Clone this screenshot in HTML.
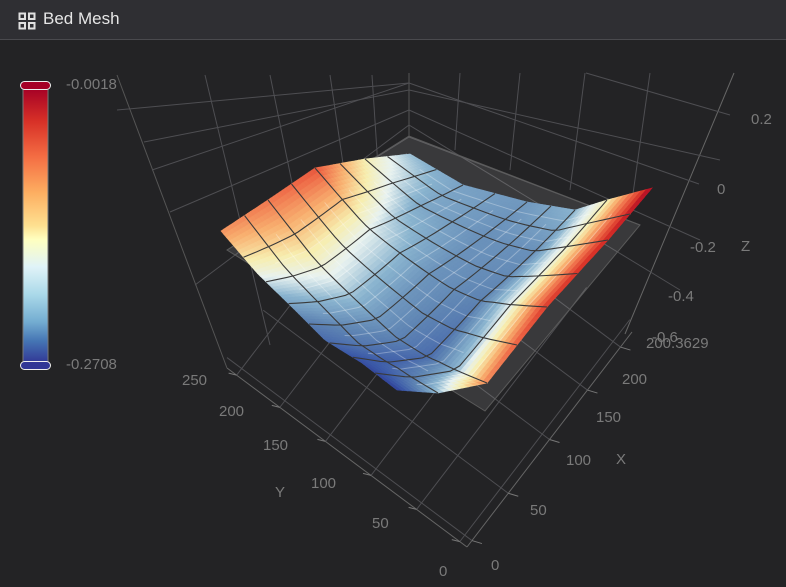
<!DOCTYPE html>
<html><head><meta charset="utf-8"><style>
html,body{margin:0;padding:0;width:786px;height:587px;overflow:hidden;background:#232325;font-family:"Liberation Sans",sans-serif}
.hdr{position:absolute;left:0;top:0;width:786px;height:40px;background:#2f2f33;border-bottom:1px solid #4a4a4e;box-sizing:border-box}
.hdr span{position:absolute;left:43px;top:9px;font-size:17px;color:#e6e6e6}
.lab{position:absolute;font-size:15px;color:#7a7a7a;white-space:nowrap;line-height:1}
</style></head><body>
<div class="hdr">
<svg style="position:absolute;left:18px;top:12px" width="18" height="18" viewBox="0 0 18 18" fill="none" stroke="#e0e0e0" stroke-width="2"><rect x="1.5" y="1.5" width="5.5" height="5.5"/><rect x="11" y="1.5" width="5.5" height="5.5"/><rect x="1.5" y="11" width="5.5" height="5.5"/><rect x="11" y="11" width="5.5" height="5.5"/></svg>
<span>Bed Mesh</span></div>

<svg style="position:absolute;left:0;top:0" width="786" height="587">
<defs><linearGradient id="cb" x1="0" y1="0" x2="0" y2="1">
<stop offset="0" stop-color="#a50026"/><stop offset="0.12" stop-color="#d73027"/><stop offset="0.25" stop-color="#f46d43"/><stop offset="0.38" stop-color="#fdae61"/><stop offset="0.5" stop-color="#fee090"/><stop offset="0.55" stop-color="#ffffbf"/><stop offset="0.65" stop-color="#e0f3f8"/><stop offset="0.75" stop-color="#abd9e9"/><stop offset="0.85" stop-color="#74add1"/><stop offset="0.92" stop-color="#4575b4"/><stop offset="1" stop-color="#313695"/></linearGradient></defs>
<rect x="23" y="88" width="25" height="275" fill="url(#cb)" stroke="#777" stroke-width="1"/>
<rect x="20.5" y="81.5" width="30" height="8" rx="4" fill="#a50026" stroke="#eee" stroke-width="1"/>
<rect x="20.5" y="361.5" width="30" height="8" rx="4" fill="#313695" stroke="#eee" stroke-width="1"/>
<g id="axes" stroke="#4e4e52" stroke-width="1" fill="none"></g>
<polygon points="227,250 409,136 640,225 485,411" fill="rgba(255,255,255,0.1)" stroke="#5a5a5a"/>
<g id="surf"></g>
</svg>

<div class="lab" style="left:66px;top:77px">-0.0018</div>
<div class="lab" style="left:66px;top:357px">-0.2708</div>
<div class="lab" style="left:751px;top:112px">0.2</div>
<div class="lab" style="left:717px;top:182px">0</div>
<div class="lab" style="left:690px;top:240px">-0.2</div>
<div class="lab" style="left:741px;top:239px">Z</div>
<div class="lab" style="left:668px;top:289px">-0.4</div>
<div class="lab" style="left:652px;top:330px">-0.6</div>
<div class="lab" style="left:646px;top:336px">200.3629</div>
<div class="lab" style="left:622px;top:372px">200</div>
<div class="lab" style="left:596px;top:410px">150</div>
<div class="lab" style="left:566px;top:453px">100</div>
<div class="lab" style="left:616px;top:452px">X</div>
<div class="lab" style="left:530px;top:503px">50</div>
<div class="lab" style="left:491px;top:558px">0</div>
<div class="lab" style="left:182px;top:373px">250</div>
<div class="lab" style="left:219px;top:404px">200</div>
<div class="lab" style="left:263px;top:438px">150</div>
<div class="lab" style="left:311px;top:476px">100</div>
<div class="lab" style="left:275px;top:485px">Y</div>
<div class="lab" style="left:372px;top:516px">50</div>
<div class="lab" style="left:439px;top:564px">0</div>

<script>
(function(){
var NS="http://www.w3.org/2000/svg";
function el(p,t,a){var e=document.createElementNS(NS,t);for(var k in a)e.setAttribute(k,a[k]);p.appendChild(e);return e;}
var ax=document.getElementById('axes');
function L(a,b,c,d,col){el(ax,'line',{x1:a,y1:b,x2:c,y2:d,stroke:col||'#4e4e52'});}
L(734,73,625,334,'#666');L(632,332,467,547,'#666');L(227,368,467,547,'#666');L(117,75,227,368,'#555');
L(409,73,409,137,'#555');L(409,83,699,184);L(586,73,730,115);L(409,83,152,170);L(409,83,117,110);
L(409,137,227,250);L(409,137,640,225);
[[205,75,270,345],[270,75,320,320],[330,75,363,300],[372,75,385,275]].forEach(function(a){L(a[0],a[1],a[2],a[3]);});
[[144,142,409,90],[170,212,409,110],[195,285,409,125]].forEach(function(a){L(a[0],a[1],a[2],a[3]);});
[[460,73,455,150],[520,73,510,170],[585,73,570,190],[650,73,630,215]].forEach(function(a){L(a[0],a[1],a[2],a[3]);});
L(409,90,720,160);L(409,110,700,240);L(409,125,680,290);
var yt=[0.04,0.22,0.41,0.6,0.79,0.97];
yt.forEach(function(t){var x=227+240*t,y=368+179*t;L(x,y,x+170,y-222);L(x-8,y-2,x,y,'#777');});
var xt=[0.03,0.25,0.5,0.73,0.93];
xt.forEach(function(t){var x=467+165*t,y=547-215*t;L(x,y,x-245,y-183);L(x,y,x+10,y+3,'#777');});

var g=document.getElementById('surf');
function pw(pts,t){for(var i=0;i<pts.length-1;i++){if(t<=pts[i+1][0]){var s=(t-pts[i][0])/(pts[i+1][0]-pts[i][0]);return [pts[i][1]+(pts[i+1][1]-pts[i][1])*s,pts[i][2]+(pts[i+1][2]-pts[i][2])*s];}}var l=pts[pts.length-1];return [l[1],l[2]];}
var bot=[[0,221,231],[0.25,268,200],[0.5,315,168],[0.75,365,159],[1,410,154]];
var top=[[0,397,390],[0.125,438,393],[0.25,487,383],[0.5,547,307],[0.75,608,240],[1,652,188]];
var lef=[[0,221,231],[0.2,257,273],[0.4,293,308],[0.6,325,340],[0.8,362,363],[1,397,390]];
var rig=[[0,410,154],[0.25,463,185],[0.5,527,202],[0.75,575,210],[0.875,607,200],[1,652,188]];
var c00=[221,231],c10=[410,154],c01=[397,390],c11=[652,188];
function P(u,v){var b=pw(bot,u),t=pw(top,u),l=pw(lef,v),r=pw(rig,v);var r2=[];
for(var k=0;k<2;k++){r2[k]=(1-v)*b[k]+v*t[k]+(1-u)*l[k]+u*r[k]-((1-u)*(1-v)*c00[k]+u*(1-v)*c10[k]+(1-u)*v*c01[k]+u*v*c11[k]);}
r2[1]+=14*Math.sin(Math.PI*u)*Math.sin(Math.PI*v);return r2;}
var vs=[0,0.25,0.5,0.75,0.875,1];
var T=[[0.75,0.80,0.86,0.58,0.40],
[0.45,0.52,0.48,0.35,0.33],
[0.22,0.30,0.29,0.28,0.30],
[0.08,0.16,0.24,0.28,0.38],
[0.04,0.38,0.48,0.52,0.56],
[0.02,0.78,0.92,0.96,1.0]];
function fv(u,v){var j=Math.min(3,Math.floor(u*4)),fu=u*4-j;var i=0;while(i<4&&v>vs[i+1])i++;var f2=(v-vs[i])/(vs[i+1]-vs[i]);
var a=T[i][j]*(1-fu)+T[i][j+1]*fu,b=T[i+1][j]*(1-fu)+T[i+1][j+1]*fu;return a*(1-f2)+b*f2;}
var st=[[0,[46,58,148]],[0.1,[60,90,168]],[0.25,[96,134,180]],[0.38,[138,180,207]],[0.48,[232,242,240]],[0.58,[247,238,176]],[0.7,[248,176,112]],[0.82,[238,106,72]],[0.93,[215,48,39]],[1,[165,0,38]]];
function col(f){f=Math.max(0,Math.min(1,f));for(var i=0;i<st.length-1;i++){if(f<=st[i+1][0]){var t=(f-st[i][0])/(st[i+1][0]-st[i][0]);var c=st[i][1].map(function(a,k){return Math.round(a+(st[i+1][1][k]-a)*t);});return 'rgb('+c+')';}}return 'rgb(165,0,38)';}
var N=64;
for(var a=0;a<N;a++)for(var b=0;b<N;b++){var u0=a/N,u1=(a+1)/N,v0=b/N,v1=(b+1)/N;
var p=[P(u0,v0),P(u1,v0),P(u1,v1),P(u0,v1)];var c=col(fv((u0+u1)/2,(v0+v1)/2));
el(g,'polygon',{points:p.map(function(q){return q[0].toFixed(1)+','+q[1].toFixed(1);}).join(' '),fill:c,stroke:c,'stroke-width':0.7});}
function line(fn,c,w){var pts=[];for(var k=0;k<=30;k++){var q=fn(k/30);pts.push(q[0].toFixed(1)+','+q[1].toFixed(1));}el(g,'polyline',{points:pts.join(' '),fill:'none',stroke:c,'stroke-width':w});}
for(var i=1;i<8;i++){(function(t){
line(function(s){return P(t+0.06,0.1+s*0.75);},'rgba(255,255,255,0.3)',1);
line(function(s){return P(0.1+s*0.8,t+0.06);},'rgba(255,255,255,0.3)',1);})(i/8);}
for(var i=1;i<8;i++){(function(t){line(function(s){return P(t,s);},'#3a3a3a',1.1);line(function(s){return P(s,t);},'#3a3a3a',1.1);})(i/8);}
})();
</script>
</body></html>
